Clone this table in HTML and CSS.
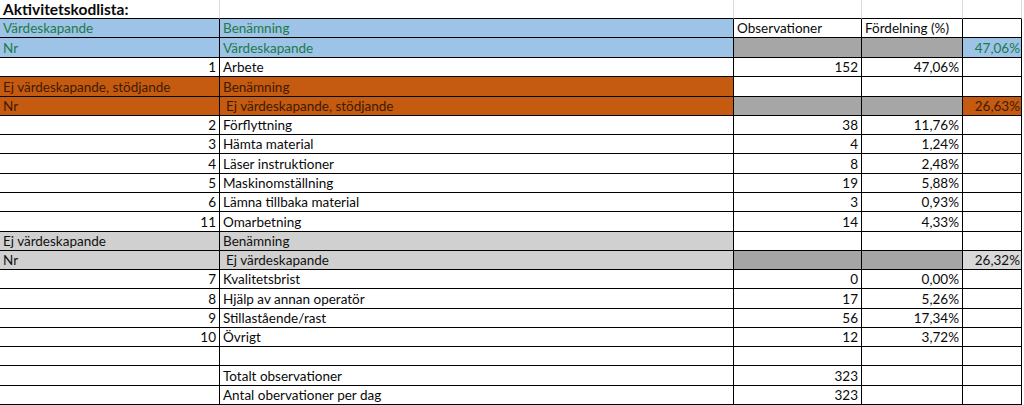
FILE: index.html
```html
<!DOCTYPE html>
<html lang="sv">
<head>
<meta charset="utf-8">
<title>Aktivitetskodlista</title>
<link rel="stylesheet" href="styles.css">
</head>
<body>
<div class="sheet">
  <div class="row title-row">
    <div class="c bold">Aktivitetskodlista:</div><div class="c"></div><div class="c"></div><div class="c"></div><div class="c"></div><div class="c f"></div>
  </div>
  <div class="row">
    <div class="c blue">Värdeskapande</div><div class="c blue">Benämning</div><div class="c">Observationer</div><div class="c">Fördelning (%)</div><div class="c"></div><div class="c f"></div>
  </div>
  <div class="row r20">
    <div class="c blue">Nr</div><div class="c blue">Värdeskapande</div><div class="c dark"></div><div class="c dark"></div><div class="c blue num e">47,06%</div><div class="c f"></div>
  </div>
  <div class="row">
    <div class="c num">1</div><div class="c">Arbete</div><div class="c num">152</div><div class="c num">47,06%</div><div class="c"></div><div class="c f"></div>
  </div>
  <div class="row r20">
    <div class="c orange">Ej värdeskapande, stödjande</div><div class="c orange">Benämning</div><div class="c"></div><div class="c"></div><div class="c"></div><div class="c f"></div>
  </div>
  <div class="row">
    <div class="c orange">Nr</div><div class="c orange ind">Ej värdeskapande, stödjande</div><div class="c dark"></div><div class="c dark"></div><div class="c orange num e">26,63%</div><div class="c f"></div>
  </div>
  <div class="row">
    <div class="c num">2</div><div class="c">Förflyttning</div><div class="c num">38</div><div class="c num">11,76%</div><div class="c"></div><div class="c f"></div>
  </div>
  <div class="row">
    <div class="c num">3</div><div class="c">Hämta material</div><div class="c num">4</div><div class="c num">1,24%</div><div class="c"></div><div class="c f"></div>
  </div>
  <div class="row r20">
    <div class="c num">4</div><div class="c">Läser instruktioner</div><div class="c num">8</div><div class="c num">2,48%</div><div class="c"></div><div class="c f"></div>
  </div>
  <div class="row">
    <div class="c num">5</div><div class="c">Maskinomställning</div><div class="c num">19</div><div class="c num">5,88%</div><div class="c"></div><div class="c f"></div>
  </div>
  <div class="row">
    <div class="c num">6</div><div class="c">Lämna tillbaka material</div><div class="c num">3</div><div class="c num">0,93%</div><div class="c"></div><div class="c f"></div>
  </div>
  <div class="row r20">
    <div class="c num">11</div><div class="c">Omarbetning</div><div class="c num">14</div><div class="c num">4,33%</div><div class="c"></div><div class="c f"></div>
  </div>
  <div class="row">
    <div class="c grey">Ej värdeskapande</div><div class="c grey">Benämning</div><div class="c"></div><div class="c"></div><div class="c"></div><div class="c f"></div>
  </div>
  <div class="row">
    <div class="c grey">Nr</div><div class="c grey ind">Ej värdeskapande</div><div class="c dark"></div><div class="c dark"></div><div class="c light num e">26,32%</div><div class="c f"></div>
  </div>
  <div class="row">
    <div class="c num">7</div><div class="c">Kvalitetsbrist</div><div class="c num">0</div><div class="c num">0,00%</div><div class="c"></div><div class="c f"></div>
  </div>
  <div class="row r20">
    <div class="c num">8</div><div class="c">Hjälp av annan operatör</div><div class="c num">17</div><div class="c num">5,26%</div><div class="c"></div><div class="c f"></div>
  </div>
  <div class="row">
    <div class="c num">9</div><div class="c">Stillastående/rast</div><div class="c num">56</div><div class="c num">17,34%</div><div class="c"></div><div class="c f"></div>
  </div>
  <div class="row">
    <div class="c num">10</div><div class="c">Övrigt</div><div class="c num">12</div><div class="c num">3,72%</div><div class="c"></div><div class="c f"></div>
  </div>
  <div class="row">
    <div class="c"></div><div class="c"></div><div class="c"></div><div class="c"></div><div class="c"></div><div class="c f"></div>
  </div>
  <div class="row r20">
    <div class="c"></div><div class="c">Totalt observationer</div><div class="c num">323</div><div class="c"></div><div class="c"></div><div class="c f"></div>
  </div>
  <div class="row">
    <div class="c"></div><div class="c">Antal obervationer per dag</div><div class="c num">323</div><div class="c"></div><div class="c"></div><div class="c f"></div>
  </div>
</div>
</body>
</html>
```

FILE: styles.css
```css
html, body {
  margin: 0;
  padding: 0;
  background: #ffffff;
}

.sheet {
  width: 1024px;
  font-family: Lato, "Liberation Sans", sans-serif;
  font-size: 13.5px;
  color: #0a0a0a;
}

.row {
  display: grid;
  grid-template-columns: 220px 514px 128px 101px 59px 2px;
  height: 19px;
}

.row.r20 {
  height: 20px;
}

.c {
  box-sizing: border-box;
  border-right: 1px solid #000000;
  border-bottom: 1px solid #000000;
  padding: 0 3px 1px 3px;
  display: flex;
  align-items: flex-end;
  line-height: 15px;
  white-space: nowrap;
  overflow: hidden;
}

.c.f {
  border: none;
}

.title-row .c {
  border-right-color: #dadada;
}

.bold {
  font-weight: 700;
  font-size: 15.5px;
}

.num {
  justify-content: flex-end;
}

.num.e {
  padding-right: 1px;
}

.ind {
  padding-left: 6px;
}

.blue {
  background: #9dc3e6;
  color: #1c7a4c;
}

.orange {
  background: #c55a11;
  color: #3f1a00;
}

.grey {
  background: #d0d0d0;
  color: #111111;
}

.light {
  background: #d9d9d9;
  color: #111111;
}

.dark {
  background: #a6a6a6;
}
```
